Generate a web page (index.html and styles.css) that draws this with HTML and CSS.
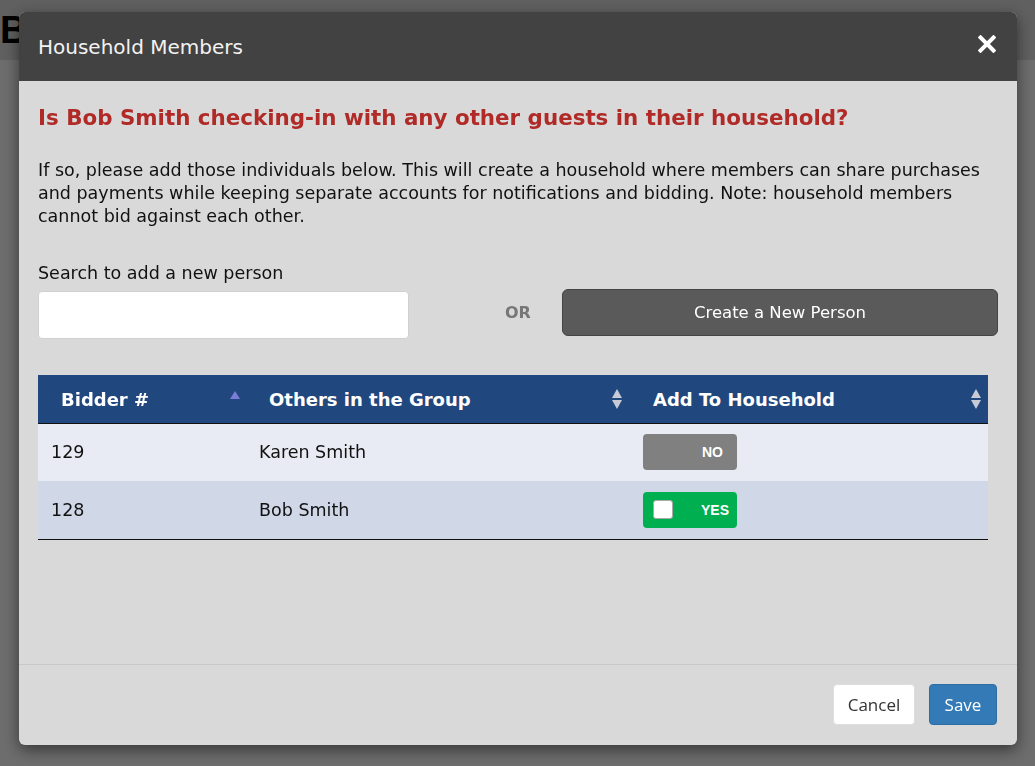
FILE: index.html
```html
<!DOCTYPE html>
<html lang="en">
<head>
  <meta charset="UTF-8">
  <meta name="viewport" content="width=device-width, initial-scale=1.0">
  <title>Bidder Check-In</title>
  <link rel="stylesheet" href="styles.css">
</head>
<body>

  <div class="page-header">
    <h1 class="page-title">B</h1>
  </div>

  <!-- Household modal -->
  <div class="overlay">
    <div class="modal">
      <div class="modal-header">
        <span class="modal-title">Household Members</span>
        <button class="close-button" aria-label="Close">
          <svg width="18" height="18" viewBox="0 0 18 18">
            <path d="M2.5 2.5 L15.5 15.5 M15.5 2.5 L2.5 15.5" stroke="#fff" stroke-width="4" stroke-linecap="square" fill="none"/>
          </svg>
        </button>
      </div>

      <div class="modal-body">
        <h3 class="question">Is Bob Smith checking-in with any other guests in their household?</h3>
        <p class="intro">If so, please add those individuals below. This will create a household where members can share purchases and payments while keeping separate accounts for notifications and bidding. Note: household members cannot bid against each other.</p>

        <div class="search-row">
          <div class="search-field">
            <label for="search">Search to add a new person</label>
            <input type="text" id="search" class="text-input">
          </div>
          <div class="or-group">
            <span class="or-label">OR</span>
            <button class="button create-button">Create a New Person</button>
          </div>
        </div>

        <table class="members-table">
          <thead>
            <tr>
              <th class="col-bidder sort-asc">Bidder #</th>
              <th class="col-name sortable">Others in the Group</th>
              <th class="col-add sortable">Add To Household</th>
            </tr>
          </thead>
          <tbody>
            <tr class="row-odd">
              <td>129</td>
              <td>Karen Smith</td>
              <td><span class="toggle toggle-off">NO</span></td>
            </tr>
            <tr class="row-even">
              <td>128</td>
              <td>Bob Smith</td>
              <td><span class="toggle toggle-on"><span class="knob"></span>YES</span></td>
            </tr>
          </tbody>
        </table>
      </div>

      <div class="modal-footer">
        <button class="button cancel-button">Cancel</button>
        <button class="button save-button">Save</button>
      </div>
    </div>
  </div>

</body>
</html>
```

FILE: styles.css
```css
body {
  margin: 0;
  background-color: #dadada;
  font-family: "DejaVu Sans", Verdana, sans-serif;
  color: #111;
  height: 766px;
  overflow: hidden;
}
.page-header {
  height: 60px;
  background-color: #c0c0c0;
  display: flex;
  align-items: center;
}
.page-title {
  margin: 0;
  font-family: "Liberation Sans", Arial, sans-serif;
  font-size: 38px;
  font-weight: bold;
  color: #000;
}
.overlay {
  position: fixed;
  top: 0;
  left: 0;
  right: 0;
  bottom: 0;
  background-color: rgba(0, 0, 0, 0.5);
  padding: 12px 0 0 19px;
}
.modal {
  width: 998px;
  height: 733px;
  background-color: #d9d9d9;
  border-radius: 6px;
  box-shadow: 0 5px 15px rgba(0, 0, 0, 0.5);
  display: flex;
  flex-direction: column;
  overflow: hidden;
}
.modal-header {
  height: 69px;
  flex: none;
  background-color: #424242;
  display: flex;
  align-items: center;
  justify-content: space-between;
  padding: 0 21px 0 19px;
}
.modal-title {
  color: #f2f2f2;
  font-size: 20px;
}
.close-button {
  background: none;
  border: none;
  padding: 0;
  display: flex;
  margin-top: -5px;
}
.modal-body {
  flex: 1;
  padding: 22px 19px 0 19px;
}
.question {
  margin: 0;
  color: #b02a27;
  font-size: 21.4px;
  line-height: 30px;
  font-weight: bold;
}
.intro {
  margin: 26px 0 0 0;
  font-size: 17.5px;
  line-height: 23px;
}
.search-row {
  display: flex;
  align-items: flex-end;
  margin-top: 34px;
}
.search-field {
  width: 371px;
}
.search-field label {
  display: block;
  font-size: 17.5px;
  line-height: 23px;
  margin-bottom: 6px;
}
.text-input {
  width: 100%;
  height: 48px;
  box-sizing: border-box;
  border: 1px solid #d0d0d0;
  border-radius: 4px;
  background-color: #fff;
}
.or-group {
  display: flex;
  align-items: center;
  margin-bottom: 3px;
}
.or-label {
  margin-left: 96px;
  width: 26px;
  color: #777;
  font-weight: bold;
  font-size: 16px;
}
.button {
  cursor: pointer;
  font-family: inherit;
}
.create-button {
  margin-left: 31px;
  width: 436px;
  height: 47px;
  background-color: #5a5a5a;
  border: 1px solid #444;
  border-radius: 6px;
  color: #fff;
  font-size: 16.5px;
}
.members-table {
  margin-top: 36px;
  width: 950px;
  border-collapse: collapse;
  font-size: 17.5px;
}
.members-table th {
  position: relative;
  height: 48px;
  padding: 0 0 0 24px;
  text-align: left;
  background-color: #21487e;
  color: #fff;
  font-size: 18px;
  font-weight: bold;
  border-bottom: 1px solid #111;
}
.members-table th.col-bidder {
  width: 184px;
  padding-left: 23px;
}
.members-table th.col-name {
  width: 360px;
}
.sort-asc::after {
  content: "";
  position: absolute;
  right: 5px;
  top: 16px;
  border-left: 5px solid transparent;
  border-right: 5px solid transparent;
  border-bottom: 8px solid #7b7bd8;
}
.sortable::before,
.sortable::after {
  content: "";
  position: absolute;
  right: 7px;
  border-left: 5px solid transparent;
  border-right: 5px solid transparent;
}
.sortable::before {
  top: 14px;
  border-bottom: 9px solid #c8cbd6;
}
.sortable::after {
  top: 25px;
  border-top: 9px solid #c8cbd6;
}
.members-table td {
  height: 57px;
  padding: 0 0 0 14px;
  box-sizing: border-box;
}
.members-table td:first-child {
  padding-left: 13px;
}
.row-odd {
  background-color: #e8ebf3;
}
.row-even {
  background-color: #d0d7e6;
  border-bottom: 1px solid #111;
}
.row-even td {
  height: 59px;
}
.toggle {
  display: flex;
  align-items: center;
  justify-content: flex-end;
  width: 94px;
  height: 36px;
  box-sizing: border-box;
  padding-right: 8px;
  border-radius: 4px;
  color: #fff;
  font-family: "Liberation Sans", Arial, sans-serif;
  font-size: 14px;
  font-weight: bold;
  position: relative;
}
.toggle-off {
  background-color: #808080;
  padding-right: 14px;
}
.toggle-on {
  background-color: #00b050;
}
.knob {
  position: absolute;
  left: 10px;
  top: 8px;
  width: 20px;
  height: 19px;
  box-sizing: border-box;
  background-color: #fff;
  border: 1px solid #aaa;
  border-radius: 3px;
}
.modal-footer {
  flex: none;
  height: 81px;
  box-sizing: border-box;
  border-top: 1px solid #c8c8c8;
  display: flex;
  justify-content: flex-end;
  align-items: flex-start;
  gap: 14px;
  padding: 19px 20px 0 0;
}
.cancel-button,
.save-button {
  height: 41px;
  border-radius: 4px;
  font-family: "Open Sans", sans-serif;
  font-size: 17px;
  padding: 0;
}
.cancel-button {
  width: 82px;
  background-color: #fff;
  border: 1px solid #ddd;
  color: #333;
}
.save-button {
  width: 68px;
  background-color: #337ab7;
  border: 1px solid #2e6da4;
  color: #fff;
}
```
